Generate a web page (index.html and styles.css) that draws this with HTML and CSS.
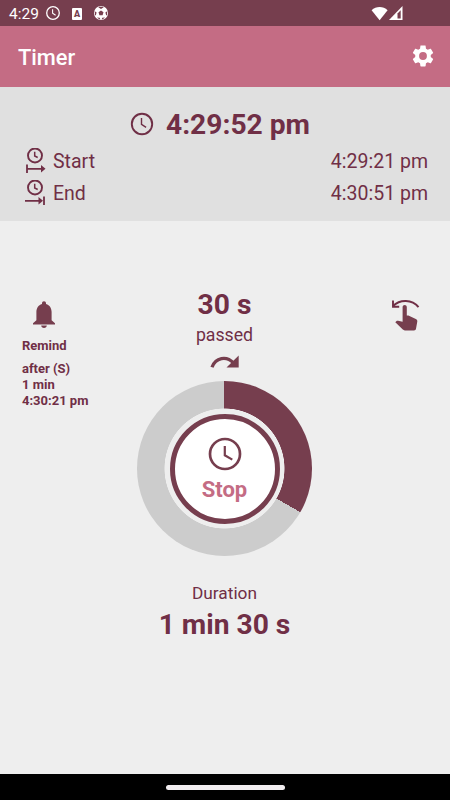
FILE: index.html
```
<!DOCTYPE html>
<html lang="en">
<head>
    <meta charset="UTF-8">
    <meta name="viewport" content="width=device-width, initial-scale=1.0">
    <title>Timer</title>
    <link rel="stylesheet" href="styles.css">
</head>
<body>

    <div class="statusbar">
        <span class="status-time">4:29</span>
        <svg class="status-clock" width="16" height="16" viewBox="0 0 16 16" fill="none" stroke="#fff">
            <circle cx="8" cy="8" r="6.3" stroke-width="1.3"/>
            <path d="M7.6 4.2v4l3 2" stroke-width="1.1"/>
        </svg>
        <span class="status-app">A</span>
        <svg class="status-ball" width="14" height="14" viewBox="0 0 14 14">
            <circle cx="7" cy="7" r="7" fill="#fff"/>
            <path d="M7 4.5l2.5 1.8-.9 2.9H5.4l-.9-2.9zM4.3 1.3L7 2.9l2.7-1.6-.8-.5H5.1zM.8 5.2l1.8 1.4-.8 2.9-.8-.6zM13.2 5.2l-1.8 1.4.8 2.9.8-.6zM3 11.6l2.7.1.7 1.7-1.5-.5zM11 11.6l-2.7.1-.7 1.7 1.5-.5z" fill="#763e4e"/>
        </svg>
        <svg class="status-signal" width="34" height="16" viewBox="0 0 34 16">
            <path d="M.6 4.3C5-.1 12.3-.1 16.6 4.300L8.600 14.200z" fill="#fff"/>
            <path d="M31.500 0v14H18z" fill="#fff"/>
            <path d="M26.500 7.600l3.200-3.300v8.200h-3.200z" fill="#763e4e"/>
        </svg>
    </div>

    <header class="appbar">
        <h1>Timer</h1>
        <svg width="26" height="26" viewBox="0 0 24 24" fill="#fff">
            <path d="M19.140 12.940c.04-.3.060-.61.060-.94 0-.32-.02-.64-.07-.94l2.030-1.580c.18-.14.230-.41.120-.61l-1.920-3.320c-.12-.22-.37-.29-.59-.22l-2.390.96c-.5-.38-1.030-.7-1.620-.94l-.36-2.540c-.04-.24-.24-.41-.48-.41h-3.840c-.24 0-.43.170-.47.410l-.36 2.540c-.59.240-1.130.570-1.620.940l-2.390-.96c-.22-.08-.47 0-.59.220L2.740 8.870c-.12.210-.08.470.120.610l2.030 1.580c-.05.300-.09.630-.09.940s.02.640.070.940l-2.030 1.580c-.18.140-.23.410-.12.610l1.920 3.320c.12.220.37.290.59.220l2.390-.96c.5.380 1.030.700 1.620.940l.36 2.540c.05.240.24.410.48.410h3.840c.24 0 .44-.17.470-.41l.36-2.540c.59-.24 1.130-.56 1.620-.94l2.390.96c.22.080.47 0 .59-.22l1.920-3.320c.12-.22.070-.47-.12-.61zM12 15.600A3.600 3.600 0 1 1 12 8.400a3.600 3.600 0 0 1 0 7.200z"/>
        </svg>
    </header>

    <section class="times">
        <div class="now">
            <svg width="24" height="24" viewBox="0 0 24 24" fill="none" stroke="#6f2f46">
                <circle cx="12" cy="12" r="10.200" stroke-width="1.900"/>
                <path d="M11.500 6v6.300l4.600 3.100" stroke-width="1.400"/>
            </svg>
            <strong>4:29:52 pm</strong>
        </div>
        <div class="time-row">
            <svg width="22" height="26" viewBox="0 0 22 26" fill="none" stroke="#702f46">
                <circle cx="10" cy="7.500" r="7" stroke-width="1.900"/>
                <path d="M9.700 3.800v4.200l3 1.500" stroke-width="1.500"/>
                <path d="M2 16.500v8.500M2 20.800h15" stroke-width="1.800"/>
                <path d="M16 17l4.500 3.800L16 24.600z" fill="#702f46" stroke="none"/>
            </svg>
            <span>Start</span>
            <span class="value">4:29:21 pm</span>
        </div>
        <div class="time-row">
            <svg width="22" height="26" viewBox="0 0 22 26" fill="none" stroke="#702f46">
                <circle cx="10" cy="7.500" r="7" stroke-width="1.900"/>
                <path d="M9.700 3.800v4.200l3 1.500" stroke-width="1.500"/>
                <path d="M19 16.500v8.500M0 20.800h15" stroke-width="1.800"/>
                <path d="M13.500 17l4.500 3.800-4.500 3.800z" fill="#702f46" stroke="none"/>
            </svg>
            <span>End</span>
            <span class="value">4:30:51 pm</span>
        </div>
    </section>

    <main class="timer">
        <div class="remind">
            <svg width="24" height="28" viewBox="0 0 24 28" fill="#763e4e">
                <path d="M12 .3c1.200 0 2 .8 2 2v.6c3.800 1 5.600 4.300 5.600 8.200v8.200l3.400 3v1.200H1v-1.200l3.400-3v-8.200c0-3.900 1.800-7.200 5.600-8.200v-.6c0-1.200.8-2 2-2z"/>
                <path d="M9.200 24.600h5.600c0 1.500-1.200 2.300-2.800 2.300s-2.800-.8-2.800-2.300z"/>
            </svg>
            <p class="remind-title">Remind</p>
            <p>after (S)</p>
            <p>1 min</p>
            <p>4:30:21 pm</p>
        </div>

        <div class="progress">
            <p class="big">30 s</p>
            <p class="passed">passed</p>
            <svg class="arrow" width="30" height="14" viewBox="0 0 30 14">
                <path d="M2 12.300C5.500 2.500 16.500.5 23.500 8" fill="none" stroke="#763e4e" stroke-width="3.300"/>
                <path d="M28.700.5v12H16.500z" fill="#763e4e"/>
            </svg>
            <div class="dial">
                <button class="stop">
                    <svg width="34" height="34" viewBox="0 0 34 34" fill="none" stroke="#763e4e">
                        <circle cx="17" cy="17" r="15" stroke-width="2.700"/>
                        <path d="M16.800 9v9.300l7.500 4.300" stroke-width="2.200"/>
                    </svg>
                    <span>Stop</span>
                </button>
            </div>
            <p class="duration">Duration</p>
            <p class="big">1 min 30 s</p>
        </div>

        <div class="gesture">
            <svg width="30" height="32" viewBox="0 0 30 32">
                <path d="M2 7C9 .2 21 .2 27.500 8.200" fill="none" stroke="#702f46" stroke-width="2"/>
                <path d="M2 1.500v6.200h6.200" fill="none" stroke="#702f46" stroke-width="1.900"/>
                <path d="M11.600 8c0-2.800 4.200-2.800 4.200 0v8.600h1.600l7.400 3.300c1.200.6 1.600 1.300 1.500 2.500L25 29.700c-.2 1-1 1.700-2 1.700h-9.200c-.8 0-1.400-.3-2-.8l-7.500-7.400 1-1c.5-.5 1.100-.6 1.800-.5l4.500 1z" fill="#763e4e"/>
            </svg>
        </div>
    </main>

    <footer class="navbar">
        <div class="handle"></div>
    </footer>

</body>
</html>
```
FILE: styles.css
```
* {
    box-sizing: border-box;
}
body {
    display: flex;
    flex-direction: column;
    width: 450px;
    height: 800px;
    margin: 0;
    overflow: hidden;
    background-color: #eeeeee;
    color: #702f46;
    font-family: Roboto, sans-serif;
}
h1, p {
    margin: 0;
}
svg {
    display: block;
    flex: none;
}

/* Status bar */
.statusbar {
    display: flex;
    align-items: center;
    height: 26px;
    padding-left: 9px;
    background-color: #763e4e;
    color: #fff;
}
.status-time {
    width: 36px;
    font-size: 15.5px;
    line-height: 26px;
    padding-top: 2px;
}
.status-app {
    width: 10px;
    height: 12px;
    margin: 1px 12px 0 11px;
    border-radius: 1px;
    background-color: #fff;
    color: #763e4e;
    font-size: 9px;
    font-weight: 900;
    line-height: 12px;
    text-align: center;
}
.status-signal {
    margin: 2px 45px 0 auto;
}

/* Title bar */
.appbar {
    display: flex;
    align-items: center;
    justify-content: space-between;
    height: 61px;
    padding: 0 14px 2px 18px;
    background-color: #c46c84;
    color: #fff;
}
.appbar h1 {
    font-size: 21.8px;
    font-weight: 500;
    line-height: 26px;
    padding-top: 4px;
}

/* Start / end panel */
.times {
    height: 134px;
    padding: 20px 22px 0 25px;
    background-color: #e0e0e0;
}
.now {
    display: flex;
    align-items: center;
    justify-content: center;
    gap: 12px;
    height: 34px;
    margin-right: 13px;
}
.now strong, .big {
    color: #702f46;
    font-size: 28.2px;
    font-weight: 700;
    line-height: 34px;
}
.now strong {
    padding-top: 1px;
}
.time-row {
    display: flex;
    align-items: center;
    height: 32px;
    font-size: 19.5px;
    font-weight: 400;
}
.now + .time-row {
    margin-top: 4px;
}
.time-row svg {
    margin-right: 6px;
}
.time-row .value {
    margin-left: auto;
}

/* Timer area */
.timer {
    display: grid;
    grid-template-columns: 115px 219px 116px;
    flex: 1;
}
.remind {
    padding: 80px 0 0 22px;
    font-size: 13px;
    font-weight: 700;
    line-height: 16px;
    white-space: nowrap;
}
.remind svg {
    margin-left: 10px;
}
.remind .remind-title {
    margin: 9px 0 7px;
}
.progress {
    display: flex;
    flex-direction: column;
    align-items: center;
    padding-top: 67px;
}
.passed {
    margin-top: 2px;
    font-size: 17.7px;
    line-height: 22px;
}
.arrow {
    margin: 9px 0 12px;
}
.dial {
    display: grid;
    place-items: center;
    width: 175px;
    height: 175px;
    border-radius: 50%;
    background: radial-gradient(circle, #eeeeee 59.7px, transparent 60.3px),
        conic-gradient(#763e4e 120deg, #cccccc 120deg);
}
.stop {
    display: flex;
    flex-direction: column;
    align-items: center;
    width: 110px;
    height: 110px;
    padding: 18px 0 0;
    border: 5px solid #763e4e;
    border-radius: 50%;
    background-color: #fff;
    color: #c46c84;
    font-family: inherit;
    font-size: 22px;
    font-weight: 700;
    line-height: 26px;
}
.stop span {
    margin-top: 6px;
}
.duration {
    margin: 27px 0 5px;
    font-size: 17.3px;
    line-height: 20px;
}
.gesture {
    padding: 78px 0 0 57px;
}

/* System navigation */
.navbar {
    display: flex;
    align-items: center;
    justify-content: center;
    height: 26px;
    background-color: #000;
}
.handle {
    width: 119px;
    height: 5px;
    border-radius: 3px;
    background-color: #f1edf0;
}
```
